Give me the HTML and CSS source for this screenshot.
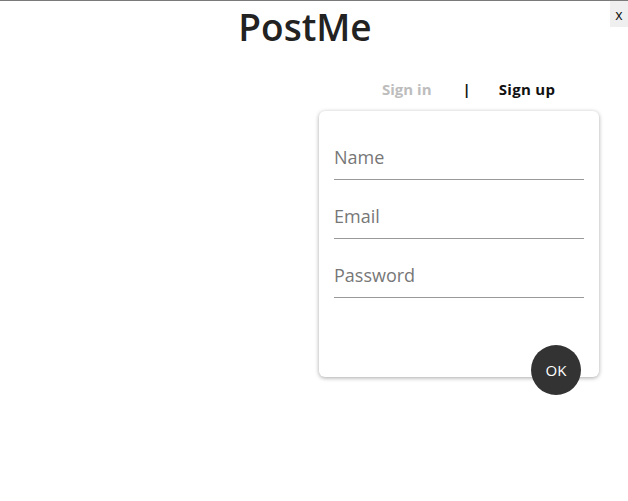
FILE: index.html
```html
<!DOCTYPE html>
<html>
<head>
<meta charset="utf-8">
<link rel="stylesheet" href="styles.css">
</head>
<body>
<header class="top">
  <h1 class="title">PostMe</h1>
  <button class="close">x</button>
</header>
<main class="main">
  <section class="panel">
    <nav class="tabs">
      <span class="tab tab-off">Sign in</span>
      <span class="sep">|</span>
      <span class="tab tab-on">Sign up</span>
    </nav>
    <form class="card">
      <input class="field" type="text" placeholder="Name">
      <input class="field" type="email" placeholder="Email">
      <input class="field" type="password" placeholder="Password">
    </form>
    <button class="ok" type="button">OK</button>
  </section>
</main>
</body>
</html>
```
FILE: styles.css
```css
html, body {
  margin: 0;
  padding: 0;
  background: #fff;
}
body {
  border-top: 1px solid #7a7a7a;
  font-family: "Open Sans", "Noto Sans", sans-serif;
  color: #222;
}
.top {
  display: flex;
  align-items: flex-start;
}
.title {
  flex: 1;
  margin: 0;
  text-align: center;
  font-size: 37px;
  font-weight: 600;
  line-height: 52px;
  color: #222;
}
.close {
  width: 18px;
  height: 26px;
  padding: 0;
  border: none;
  background: #efefef;
  font-family: "Open Sans", sans-serif;
  font-size: 14px;
  color: #111;
}
.main {
  display: flex;
  justify-content: flex-end;
  padding-right: 29px;
}
.panel {
  width: 280px;
  margin-top: 26px;
  display: flex;
  flex-direction: column;
}
.tabs {
  display: flex;
  padding-left: 63px;
  font-size: 15px;
  font-weight: 700;
  line-height: 20px;
  height: 20px;
  margin-bottom: 12px;
}
.tab-off { color: #bdbdbd; }
.tab-on { color: #111; letter-spacing: 0.3px; }
.sep { color: #111; margin: 0 28px 0 31px; }
.card {
  display: flex;
  flex-direction: column;
  padding: 10px 15px 79px;
  border-radius: 6px;
  box-shadow: 0 1px 4px rgba(0, 0, 0, 0.35);
  background: #fff;
}
.field {
  margin-top: 19px;
  height: 40px;
  box-sizing: border-box;
  padding: 0 0 6px;
  border: none;
  border-bottom: 1px solid #999;
  outline: none;
  font-family: "Open Sans", "Noto Sans", sans-serif;
  font-size: 18px;
  color: #333;
  background: transparent;
}
.field::placeholder { color: #777; }
.ok {
  align-self: flex-end;
  margin: -32px 18px 0 0;
  width: 50px;
  height: 50px;
  border-radius: 50%;
  border: none;
  background: #333;
  color: #fff;
  font-family: "Open Sans", sans-serif;
  font-size: 15px;
  padding: 0;
}
```
